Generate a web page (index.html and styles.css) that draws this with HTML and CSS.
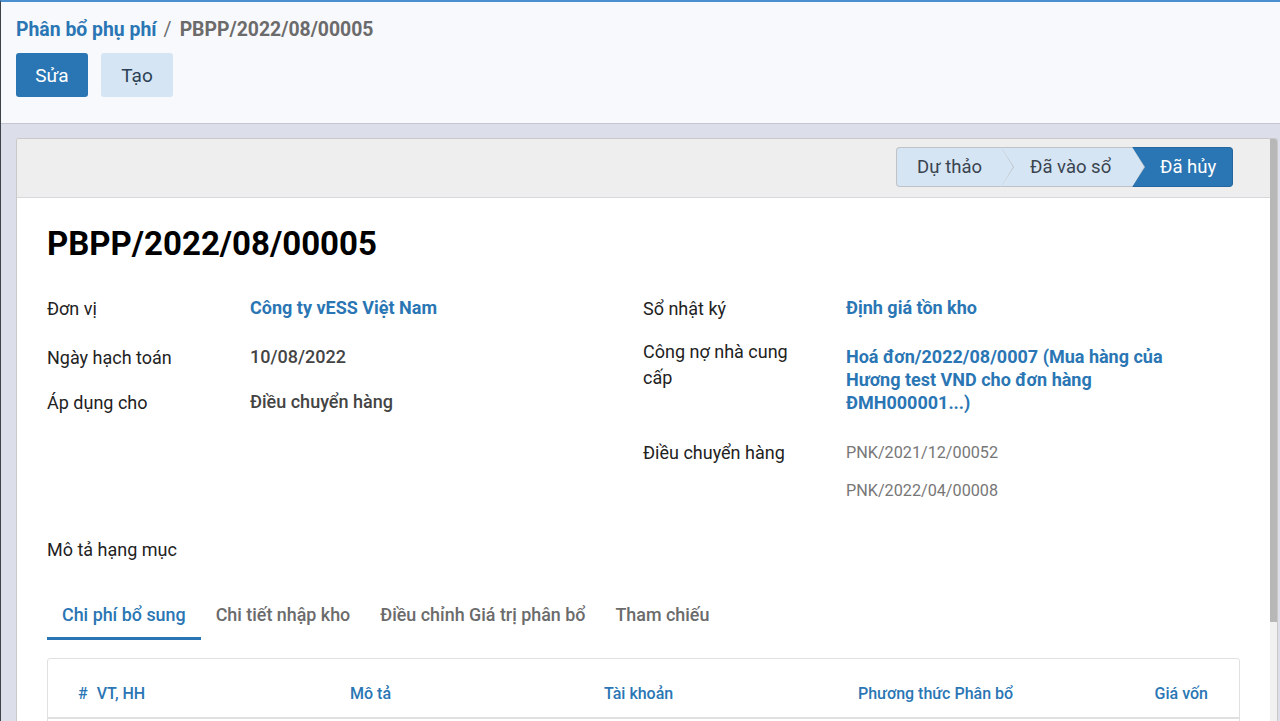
FILE: index.html
```html
<!DOCTYPE html>
<html lang="vi">
<head>
<meta charset="utf-8">
<title>Phân bổ phụ phí</title>
<link rel="stylesheet" href="styles.css">
</head>
<body>
<div class="app">
  <div class="control-panel">
    <div class="breadcrumb">
      <a class="crumb-link">Phân bổ phụ phí</a>
      <span class="crumb-sep">/</span>
      <span class="crumb-current">PBPP/2022/08/00005</span>
    </div>
    <div class="actions">
      <button class="btn btn-primary">Sửa</button>
      <button class="btn btn-secondary">Tạo</button>
    </div>
  </div>
  <div class="content">
    <div class="sheet-frame">
      <div class="sheet-main">
        <div class="statusbar">
          <div class="status-steps">
            <span class="step step-first">Dự thảo</span>
            <span class="step step-mid">Đã vào sổ</span>
            <span class="step step-active">Đã hủy</span>
          </div>
        </div>
        <div class="sheet">
          <h1 class="title">PBPP/2022/08/00005</h1>
          <div class="groups">
            <div class="group">
              <div class="field"><div class="label">Đơn vị</div><div class="value link">Công ty vESS Việt Nam</div></div>
              <div class="field f-date"><div class="label">Ngày hạch toán</div><div class="value plain">10/08/2022</div></div>
              <div class="field f-apply"><div class="label">Áp dụng cho</div><div class="value plain">Điều chuyển hàng</div></div>
            </div>
            <div class="group">
              <div class="field"><div class="label">Sổ nhật ký</div><div class="value link">Định giá tồn kho</div></div>
              <div class="field f-debt"><div class="label">Công nợ nhà cung cấp</div><div class="value link">Hoá đơn/2022/08/0007 (Mua hàng của Hương test VND cho đơn hàng ĐMH000001...)</div></div>
              <div class="field f-transfer"><div class="label">Điều chuyển hàng</div>
                <div class="value tags">
                  <span class="tag">PNK/2021/12/00052</span>
                  <span class="tag">PNK/2022/04/00008</span>
                </div>
              </div>
            </div>
          </div>
          <div class="desc-label">Mô tả hạng mục</div>
          <div class="tabs">
            <span class="tab active">Chi phí bổ sung</span>
            <span class="tab">Chi tiết nhập kho</span>
            <span class="tab">Điều chỉnh Giá trị phân bổ</span>
            <span class="tab">Tham chiếu</span>
          </div>
          <div class="table-wrap">
            <table class="lines">
              <thead>
                <tr>
                  <th class="c-prod"><span class="hash">#</span>VT, HH</th>
                  <th class="c-desc">Mô tả</th>
                  <th class="c-acc">Tài khoản</th>
                  <th class="c-method">Phương thức Phân bổ</th>
                  <th class="c-cost">Giá vốn</th>
                </tr>
              </thead>
              <tbody>
                <tr><td colspan="5" class="empty"></td></tr>
              </tbody>
            </table>
          </div>
        </div>
      </div>
      <div class="scrollbar"><div class="thumb"></div></div>
    </div>
  </div>
</div>
</body>
</html>
```

FILE: styles.css
```css
* { box-sizing: border-box; }
html, body { margin: 0; padding: 0; height: 100%; }
body {
  font-family: Roboto, "Noto Sans", "DejaVu Sans", sans-serif;
  color: #212529;
  background: #dcdfe9;
  overflow: hidden;
}
.app {
  height: 721px;
  display: flex;
  flex-direction: column;
  border-left: 1px solid #3d4249;
  border-top: 2px solid #4a8fd0;
}
.control-panel {
  height: 122px;
  background: #f8f9fc;
  border-bottom: 1px solid #c4c7cf;
  padding: 15px 15px 0 15px;
  flex: none;
}
.breadcrumb {
  display: flex;
  align-items: center;
  height: 24px;
  font-size: 19.4px;
  font-weight: 700;
}
.crumb-link { color: #2a76b4; }
.crumb-sep { color: #6b6b6b; font-weight: 400; margin: 0 8px 0 7px; }
.crumb-current { color: #6b6b6b; }
.actions { display: flex; gap: 13px; margin-top: 12px; }
.btn {
  width: 72px;
  height: 44px;
  border: none;
  border-radius: 3px;
  font-family: inherit;
  font-size: 19px;
  padding: 0;
}
.btn-primary { background: #2a76b4; color: #fff; }
.btn-secondary { background: #d5e5f3; color: #2b3f55; }

.content {
  flex: 1;
  min-height: 0;
  padding: 14px 2px 0 15px;
}
.sheet-frame {
  height: 100%;
  display: flex;
  background: #fff;
  border: 1px solid #c9c9c9;
  border-bottom: none;
  border-radius: 3px 3px 0 0;
  overflow: hidden;
}
.sheet-main { flex: 1; min-width: 0; overflow: hidden; }
.scrollbar {
  width: 7px;
  flex: none;
  background: #f1f1f1;
}
.thumb { height: 483px; background: #b7b7b7; }

.statusbar {
  height: 59px;
  background: #eeeeee;
  border-bottom: 1px solid #d6d8dc;
  display: flex;
  justify-content: flex-end;
  align-items: flex-start;
  padding: 8px 37px 0 0;
}
.status-steps {
  display: flex;
  height: 40px;
}
.step {
  height: 40px;
  display: flex;
  align-items: center;
  font-size: 18.5px;
  color: #3a4450;
  background: #d5e5f3;
  position: relative;
}
.step-first {
  width: 105px;
  padding-left: 20px;
  border: 1px solid #bfc3c8;
  border-right: none;
  border-radius: 4px 0 0 4px;
}
.step-mid {
  width: 131px;
  padding-left: 29px;
  border-top: 1px solid #bfc3c8;
  border-bottom: 1px solid #bfc3c8;
}
.step-first::after, .step-mid::after {
  content: "";
  position: absolute;
  right: -13px;
  top: -1px;
  width: 0; height: 0;
  border-top: 20px solid transparent;
  border-bottom: 20px solid transparent;
  border-left: 13px solid #bfc3c8;
  z-index: 2;
}
.step-first::before, .step-mid::before {
  content: "";
  position: absolute;
  right: -12px;
  top: -1px;
  width: 0; height: 0;
  border-top: 20px solid transparent;
  border-bottom: 20px solid transparent;
  border-left: 12px solid #d5e5f3;
  z-index: 3;
}
.step-active {
  width: 101px;
  padding-left: 28px;
  background: #2a76b4;
  color: #fff;
  border-radius: 0 4px 4px 0;
  border: 1px solid #24679e;
  border-left: none;
}

.sheet { padding: 26px 30px 0 30px; }
.title {
  margin: 0;
  font-size: 33px;
  font-weight: 700;
  color: #000;
  line-height: 40px;
  height: 40px;
}
.groups {
  display: grid;
  grid-template-columns: 596px 1fr;
  margin-top: 32px;
}
.field {
  display: grid;
  grid-template-columns: 203px 1fr;
  font-size: 18px;
}
.label { color: #222; line-height: 26px; padding-right: 30px; }
.value { line-height: 22px; padding-top: 1px; }
.link { color: #2a76b4; font-weight: 700; }
.plain { color: #444; font-weight: 500; }
.f-date { margin-top: 23px; }
.f-apply { margin-top: 19px; }
.f-debt { margin-top: 17px; }
.f-debt .value { padding-top: 6px; line-height: 23px; padding-right: 60px; }
.f-transfer { margin-top: 26px; }
.tags { display: flex; flex-direction: column; gap: 16px; padding-top: 2px; }
.tag { font-size: 16.2px; color: #777; line-height: 22px; }

.desc-label { font-size: 18px; margin-top: 35px; line-height: 26px; color: #222; }

.tabs {
  display: flex;
  margin-top: 41px;
}
.tab {
  font-size: 17.9px;
  font-weight: 500;
  color: #6b6b6b;
  padding: 0 15px 11px 15px;
  line-height: 22px;
  border-bottom: 3px solid transparent;
}
.tab.active { color: #2a76b4; border-bottom-color: #2a76b4; }

.table-wrap {
  margin-top: 18px;
  border: 1px solid #e0e0e0;
  border-radius: 3px 3px 0 0;
}
.lines { width: 100%; border-collapse: collapse; }
.lines th {
  font-size: 16px;
  font-weight: 500;
  color: #2a76b4;
  text-align: left;
  height: 59px;
  border-bottom: 2px solid #e0e0e0;
  padding: 10px 0 0 0;
}
.hash { margin-right: 9px; }
.c-prod { padding-left: 30px !important; width: 302px; }
.c-desc { width: 254px; }
.c-acc { width: 254px; }
.c-method { width: 240px; }
.c-cost { text-align: right !important; padding-right: 31px !important; }
.empty { height: 120px; }
```
